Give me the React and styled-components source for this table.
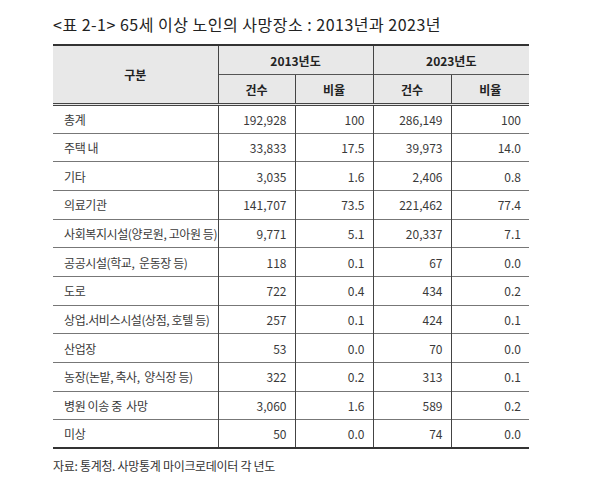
import React from 'react';
import styled, { createGlobalStyle } from 'styled-components';

const GlobalStyle = createGlobalStyle`
    html, body {
        margin: 0;
        padding: 0;
        background: #fff;
    }
    body {
        font-family: "Noto Sans CJK KR", "Noto Sans", sans-serif;
        color: #333;
    }
`;

const Page = styled.div`
    width: 601px;
    height: 497px;
    padding: 13px 0 0 53px;
    box-sizing: border-box;
`;

const Title = styled.h1`
    margin: 0 0 9px;
    font-size: 16px;
    line-height: 22px;
    font-weight: 400;
    color: #222;
    letter-spacing: 0.5px;
`;

const Table = styled.table`
    width: 476px;
    border-collapse: collapse;
    table-layout: fixed;
    font-size: 12px;
    border-top: 2px solid #333;
    border-bottom: 2px solid #333;
`;

const HeadCell = styled.th`
    background: #e8e8e8;
    height: 28px;
    padding: 0;
    font-weight: 700;
    color: #222;
    text-align: center;
    border-left: ${p => (p.$first ? 'none' : '1px solid #444')};
    border-top: ${p => (p.$sub ? '1px solid #555' : 'none')};
    border-bottom: ${p => (p.$sub || p.$first ? '3px double #444' : 'none')};
`;

const Row = styled.tr`
    height: 28.67px;
    border-top: 1px solid #777;
`;

const Cell = styled.td`
    padding: 0 ${p => (p.$label ? '0 0 11px' : '8px 0 0')};
    text-align: ${p => (p.$label ? 'left' : 'right')};
    border-left: ${p => (p.$label ? 'none' : '1px solid #444')};
    letter-spacing: ${p => (p.$label ? '-0.4px' : '0')};
    color: #3a3a3a;
    white-space: pre;
`;

const Source = styled.p`
    margin: 8px 0 0;
    font-size: 12px;
    color: #333;
    letter-spacing: -0.3px;
    white-space: pre;
`;

const rows = [
    ['총계', '192,928', '100', '286,149', '100'],
    ['주택 내', '33,833', '17.5', '39,973', '14.0'],
    ['기타', '3,035', '1.6', '2,406', '0.8'],
    ['의료기관', '141,707', '73.5', '221,462', '77.4'],
    ['사회복지시설(양로원, 고아원 등)', '9,771', '5.1', '20,337', '7.1'],
    ['공공시설(학교,  운동장 등)', '118', '0.1', '67', '0.0'],
    ['도로', '722', '0.4', '434', '0.2'],
    ['상업.서비스시설(상점, 호텔 등)', '257', '0.1', '424', '0.1'],
    ['산업장', '53', '0.0', '70', '0.0'],
    ['농장(논밭, 축사,  양식장 등)', '322', '0.2', '313', '0.1'],
    ['병원 이송 중  사망', '3,060', '1.6', '589', '0.2'],
    ['미상', '50', '0.0', '74', '0.0']
];

export default function App() {
    return (
        <Page>
            <GlobalStyle />
            <Title>&lt;표 2-1&gt; 65세 이상 노인의 사망장소 : 2013년과 2023년</Title>
            <Table>
                <colgroup>
                    <col style={{ width: 165 }} />
                    <col style={{ width: 77 }} />
                    <col style={{ width: 78 }} />
                    <col style={{ width: 78 }} />
                    <col style={{ width: 78 }} />
                </colgroup>
                <thead>
                    <tr>
                        <HeadCell $first rowSpan={2}>구분</HeadCell>
                        <HeadCell colSpan={2}>2013년도</HeadCell>
                        <HeadCell colSpan={2}>2023년도</HeadCell>
                    </tr>
                    <tr>
                        <HeadCell $sub>건수</HeadCell>
                        <HeadCell $sub>비율</HeadCell>
                        <HeadCell $sub>건수</HeadCell>
                        <HeadCell $sub>비율</HeadCell>
                    </tr>
                </thead>
                <tbody>
                    {rows.map(([label, ...values], i) => (
                        <Row key={i}>
                            <Cell $label>{label}</Cell>
                            {values.map((v, j) => (
                                <Cell key={j}>{v}</Cell>
                            ))}
                        </Row>
                    ))}
                </tbody>
            </Table>
            <Source>자료: 통계청. 사망통계 마이크로데이터 각 년도</Source>
        </Page>
    );
}
